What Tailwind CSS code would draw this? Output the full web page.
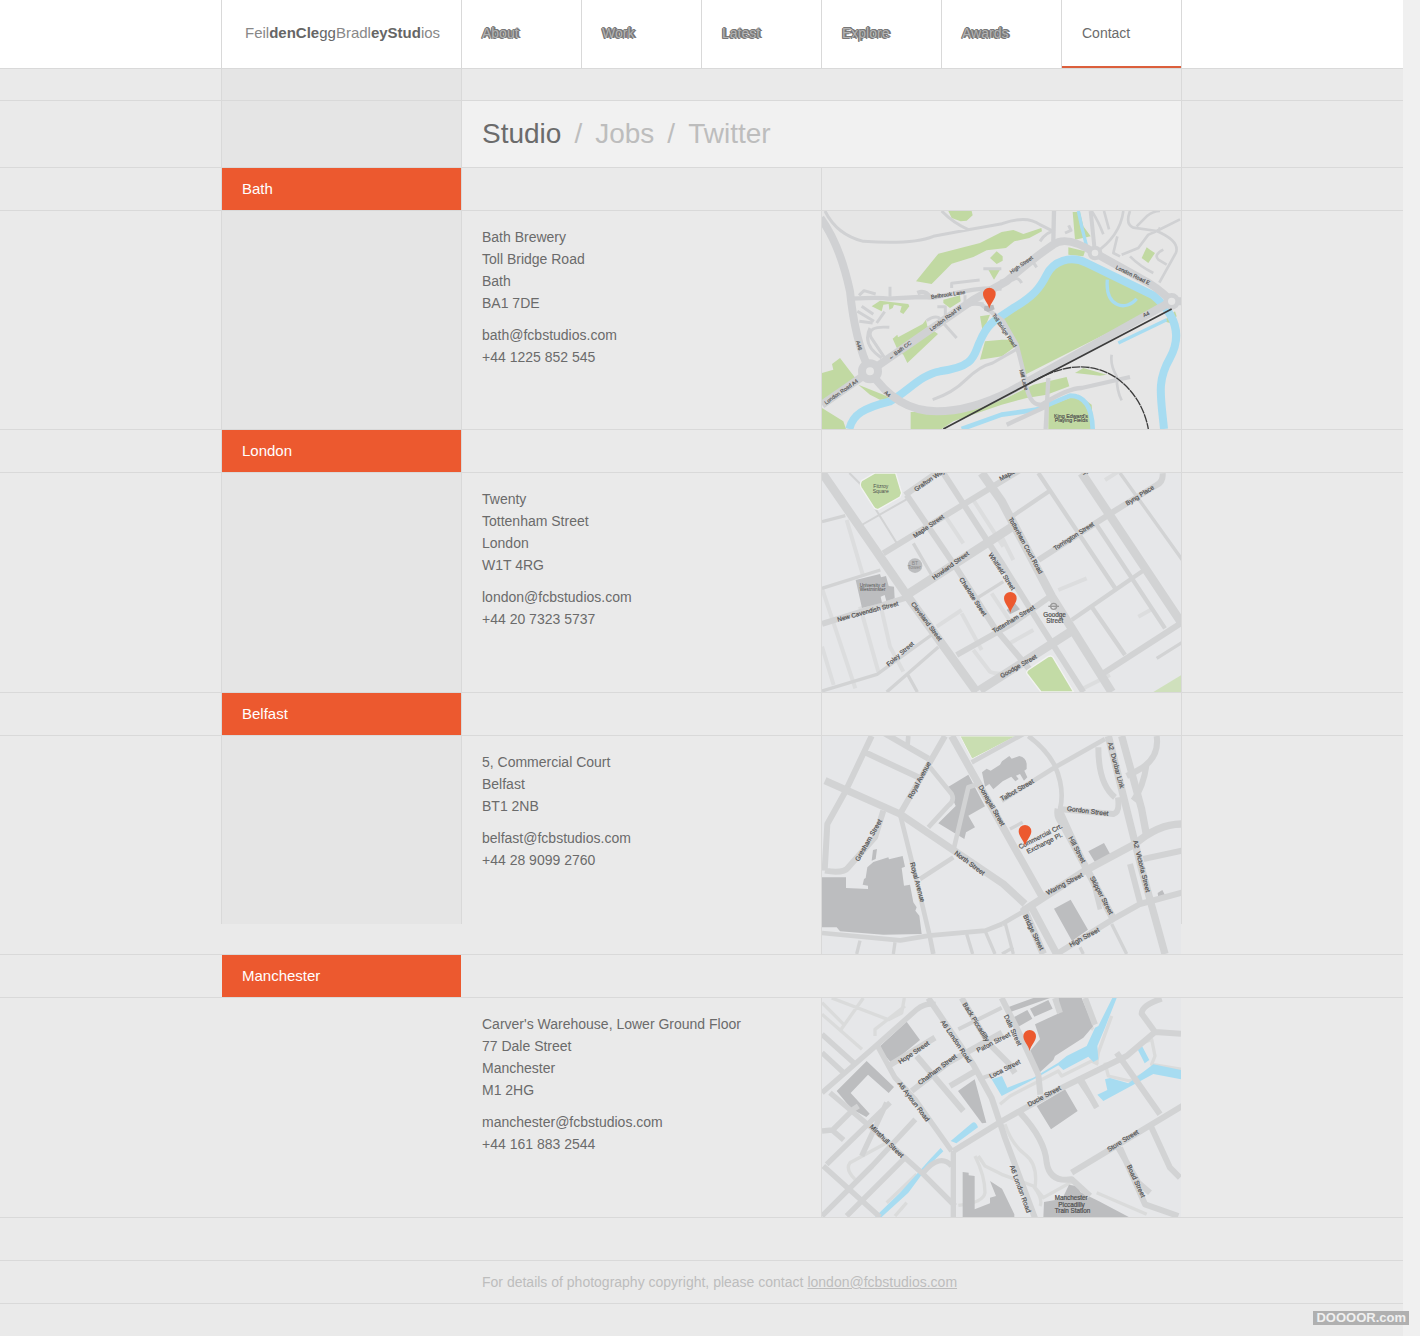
<!DOCTYPE html>
<html lang="en">
<head>
<meta charset="utf-8">
<meta name="viewport" content="width=device-width, initial-scale=1">
<title>Contact – FeildenCleggBradleyStudios</title>
<script src="https://cdn.jsdelivr.net/npm/@tailwindcss/browser@4"></script>
</head>
<body class="flex min-h-screen bg-[#f0f0f0] font-['Liberation_Sans',Arial,sans-serif] text-sm text-[#6b6b6b]">

<!-- shared map pin -->
<svg class="absolute size-0" aria-hidden="true">
  <symbol id="pin" viewBox="-20 -64 40 66" overflow="visible"><path fill="#ec592f" d="M0 0C-4-18-19-29-19-44a19 19 0 1 1 38 0C19-29 4-18 0 0Z"/></symbol>
</svg>

<div class="relative isolate min-w-0 flex-1 bg-[#eaeaea]">

  <!-- column tint and guides -->
  <div class="absolute inset-x-0 top-0 -z-10 h-[924px]" aria-hidden="true">
    <div class="mx-auto flex h-full w-[961px] border-x border-[#d9d9d9]">
      <div class="w-60 border-r border-[#d9d9d9] bg-[#e5e5e5]"></div>
    </div>
  </div>

  <header class="border-b border-[#d9d9d9] bg-white">
    <div class="mx-auto flex h-17 w-[961px] border-r border-[#d9d9d9]">
      <a href="#" class="flex w-60 items-center border-l border-[#d9d9d9] pb-0.5 pl-[23px] text-[15px] text-[#888]"><span>Feil<b class="font-bold text-[#666]">denCle</b><span class="text-[#666]">gg</span>Bradl<b class="font-bold text-[#666]">eyStud</b>ios</span></a>
      <nav class="grid flex-1 grid-cols-6">
        <a href="#" class="flex items-center border-l border-[#d9d9d9] pb-0.5 pl-5 text-[#b4b4b4] [text-shadow:-1px_0_#777,1px_0_#777,2px_0_#777,-1px_1px_#777,1px_-1px_#777,0_-1px_#777]">About</a>
        <a href="#" class="flex items-center border-l border-[#d9d9d9] pb-0.5 pl-5 text-[#b4b4b4] [text-shadow:-1px_0_#777,1px_0_#777,2px_0_#777,-1px_1px_#777,1px_-1px_#777,0_-1px_#777]">Work</a>
        <a href="#" class="flex items-center border-l border-[#d9d9d9] pb-0.5 pl-5 text-[#b4b4b4] [text-shadow:-1px_0_#777,1px_0_#777,2px_0_#777,-1px_1px_#777,1px_-1px_#777,0_-1px_#777]">Latest</a>
        <a href="#" class="flex items-center border-l border-[#d9d9d9] pb-0.5 pl-5 text-[#b4b4b4] [text-shadow:-1px_0_#777,1px_0_#777,2px_0_#777,-1px_1px_#777,1px_-1px_#777,0_-1px_#777]">Explore</a>
        <a href="#" class="flex items-center border-l border-[#d9d9d9] pb-0.5 pl-5 text-[#b4b4b4] [text-shadow:-1px_0_#777,1px_0_#777,2px_0_#777,-1px_1px_#777,1px_-1px_#777,0_-1px_#777]">Awards</a>
        <div class="flex border-l border-[#d9d9d9]"><a href="#" aria-current="page" class="flex flex-1 items-center border-b-2 border-[#dc5f3c] pl-5">Contact</a></div>
      </nav>
    </div>
  </header>

  <main>
    <div class="h-8 border-b border-[#d9d9d9]"></div>

    <div class="border-b border-[#d9d9d9]">
      <div class="mx-auto flex w-[961px] pr-px pl-[241px]">
        <nav class="flex h-[66px] flex-1 items-center gap-[13px] bg-[#f1f1f1] pl-5 text-[28px] text-[#bdbdbd]">
          <a href="#" class="text-[#6b6b6b]">Studio</a><span>/</span><a href="#">Jobs</a><span>/</span><a href="#">Twitter</a>
        </nav>
      </div>
    </div>

    <section>
      <div class="border-b border-[#d9d9d9]">
        <div class="mx-auto flex h-[42px] w-[961px] pl-px">
          <h2 class="flex w-[239px] items-center bg-[#ec592f] pl-5 text-[15px] text-white">Bath</h2>
          <div class="ml-[360px] border-l border-[#d9d9d9]"></div>
        </div>
      </div>
      <div class="border-b border-[#d9d9d9]">
        <div class="mx-auto flex w-[961px] pr-px pl-[261px]">
          <address class="flex-1 pt-[15px] leading-[22px] not-italic">
            <p>Bath Brewery<br>Toll Bridge Road<br>Bath<br>BA1 7DE</p>
            <p class="mt-2.5"><a href="mailto:bath@fcbstudios.com">bath@fcbstudios.com</a><br>+44 1225 852 545</p>
          </address>
          <a href="#" aria-label="Map of the Bath studio" class="block h-[218px] w-90 border-l border-[#d9d9d9]">
            <svg class="size-full" viewBox="6 9 1077 654" preserveAspectRatio="none" fill="none" stroke-linejoin="round" font-family="Liberation Sans">
              <path fill="#e6e6e6" d="M0 0h1100v700H0z"/>
              <g fill="#c1d9a2">
                <path d="M385 9h70l3 13-18 16-18 2-27-10zM288 220l67-83 125-32 65-33 35-6 30 12 54-18 2 10-38 20-45 10-25 20-58 7-40 20-65 20-60 61zM510 150l20-20 18 15v13l-18 10zM505 185h35l-18 30zM155 295l25-17 85 10 3 7-18 23-10-6 5-17-23-5-4 10-10 5-2-17-16 2-5 20zM370 275l50-13 2 18-32 20-20-15zM218 392l14-12 2 8 74-40 10-13 4 20 32 23-92 87-12-25-15-10zM6 495l34-10-4-17 24-18 50 65-30 30-74 45zM115 530l75 30 25 12-35 3-30-15zM6 600l64 40 8 23H6zM480 325l30-5-10 25-13 20zM480 455l15-55 51-5h34v25l-34 25z"/>
                <path d="M272 612h160l128-42 80-40 100-23 8 28-68 25-60 10-75 20-145 50-35 23h-93zM545 330l95-60 50-85 50-25 50 5 100 50 130 70 10 5-415 210-35-95zM758 12h22l10 43 22 30-47 10zM745 118l50 12-5 15-45-5zM965 150l15-32 10 7 15 10-20 30zM1030 340l35-30 5 15-20 20zM765 495l25-15 70 20-20 3zM685 595l90-35 40 30 5 73H685z"/>
              </g>
              <g stroke="#a7dcf1">
                <path stroke-width="24" d="M88 663C98 620 130 600 210 580 260 555 300 500 360 490 470 475 460 440 480 400 505 340 530 335 580 300 640 265 660 240 680 200 700 160 750 140 800 165L1000 262C1080 330 1080 395 1050 450 1010 520 1022 560 1032 663"/>
                <path stroke-width="10" d="M775 9q10 51 25 106M862 215c-7 85 58 95 88 57M895 405l145-70"/>
                <path stroke-width="14" d="M425 663l120-43 105-15 100-42q65 0 68 100"/>
              </g>
              <g stroke="#d0d1d3">
                <path stroke-width="24" d="M2 30q58 80 88 220 15 150 60 240Q230 610 350 610q100 0 220-60l485-270M6 590l144-100 310-215 100-55q80-70 140-110 40-30 125 25l135 75q50 25 95 70h28"/>
                <path stroke-width="9" d="M15 9q35 71 115 91 150 10 210-15 100-20 206-38 74-27 114 3l40 20M365 9q35 36 80 56M117 262l15-14 35 10M210 236v30M395 240v-14l84-10M435 262v20M320 338q20-15 35-10 30 35 55 62M112 310l50 30M118 340l40 5M125 295l35 24M170 345l24-34M208 358q-70-5-55 30l40 60M150 360q-25 50 35 90M338 575q60-20 100-60t80-50l70-40M490 182h54M352 296h24v30M540 220l40-5q15-10 25 10M640 163l10 15M660 100q20-30 45-30M735 75l18-8-7-15"/>
                <path stroke-width="8" d="M815 9q20 30 35 70M852 9l15 55M910 9q-10 76-85 126M930 9q-15 40 10 50l70 10 70-35M950 55l30-30q20-16 40-16M1010 69q70 30 58 65l-50 90M892 85l-12 50 20 10M905 140l50-20 30-40q40-15 30-20M930 145q30 30 70 50M1030 125q-30 15-15 30l25 15M875 440q-5 30 15 65 0 45 15 72"/>
                <path stroke-width="12" d="M812 9l13 126"/>
                <path stroke-width="13" d="M95 272q85-5 110 0l95-5 40 2 60-12q80-20 145-15M702 9l-2 90M485 290l20 15 45 35 40 70 25 100q10 85 50 80 80-50 120-50l145-33M685 510l-8 153M560 650l120-55M430 300q20-20 60-10M292 255q25-10 40 15"/>
              </g>
              <g fill="#e6e6e6" stroke="#d0d1d3"><circle cx="150" cy="490" r="24" stroke-width="24"/><circle cx="825" cy="135" r="16" stroke-width="12"/><circle cx="1055" cy="280" r="18" stroke-width="14"/></g>
              <g stroke="#3c3c3c"><path stroke-width="5" d="M370 663L625 528l430-225"/><path stroke-width="4" stroke-dasharray="26 2" d="M625 528C740 460 820 465 890 510 950 555 975 610 985 663"/></g>
              <path fill="#b9babc" d="M493 295l27-5 4 14-20 8-12-5z"/>
              <g fill="#4f4f4f" stroke="#4f4f4f" stroke-width="0.5" font-size="16">
                <text transform="translate(334 272) rotate(-8)">Belbrook Lane</text><text transform="translate(334 370) rotate(-37)">London Road W</text><text transform="translate(210 455) rotate(-36)">← Bath CC</text><text transform="translate(18 590) rotate(-35)">London Road A4</text><text transform="translate(108 400) rotate(75)">A46</text><text transform="translate(191 556) rotate(38)">A4</text><text transform="translate(574 198) rotate(-35)">High Street</text><text transform="translate(886 182) rotate(26)">London Road E</text><text transform="translate(972 328) rotate(-26)">A4</text><text transform="translate(516 322) rotate(56)">Toll Bridge Road</text><text transform="translate(598 486) rotate(75)">Mill Lane</text><text x="702" y="630">King Edward's</text><text x="704" y="643">Playing Fields</text>
              </g>
              <use href="#pin" x="488" y="238" width="40" height="66"/>
            </svg>
          </a>
        </div>
      </div>
    </section>

    <section>
      <div class="border-b border-[#d9d9d9]">
        <div class="mx-auto flex h-[42px] w-[961px] pl-px">
          <h2 class="flex w-[239px] items-center bg-[#ec592f] pl-5 text-[15px] text-white">London</h2>
          <div class="ml-[360px] border-l border-[#d9d9d9]"></div>
        </div>
      </div>
      <div class="border-b border-[#d9d9d9]">
        <div class="mx-auto flex w-[961px] pr-px pl-[261px]">
          <address class="flex-1 pt-[15px] leading-[22px] not-italic">
            <p>Twenty<br>Tottenham Street<br>London<br>W1T 4RG</p>
            <p class="mt-2.5"><a href="mailto:london@fcbstudios.com">london@fcbstudios.com</a><br>+44 20 7323 5737</p>
          </address>
          <a href="#" aria-label="Map of the London studio" class="block h-[219px] w-90 border-l border-[#d9d9d9]">
            <svg class="size-full" viewBox="6 9 1077 657" preserveAspectRatio="none" fill="none" stroke-linejoin="round" font-family="Liberation Sans">
              <path fill="#e6e7e9" d="M0 0h1100v700H0z"/>
              <g stroke="#dcddde" stroke-width="12">
                <path d="M80 150l50 170M120 410l55 195M6 355l35 105 65 195M6 530l35 115M185 420l25 110 40 75M380 145l50 75M460 90l90 140M545 200l35 70M350 470l75-50M425 430l60 110M460 540l50 65q10 5 36 6M515 370l60 90M715 360l85-35M560 525l80-45M955 440l40-22M855 30l40-25M780 660l90-45"/>
              </g>
              <g stroke="#d2d3d4">
                <path stroke-width="6" d="M88 9l30 30 112 180M125 165l140-80"/>
                <path stroke-width="10" d="M6 355l175-55M6 155l70-18M6 663l165-50 180-130M200 666l155-135M262 612l30 54M280 220l55 95M470 385l80-50M1010 565l80-50M900 9l190 265"/>
                <path stroke-width="13" d="M655 9l230 345M575 140l110-75M755 450l225-155M815 410l100 145M830 165l205 310"/>
                <path stroke-width="18" d="M255 75l100-70M260 75l150 220 115 180 160 190M190 250L600 0M410 555l160-90 120-85M655 270l225-145 130-80q20-10 18-35M850 610l240-155M6 462l250-78M370 9l175 270 125 200 120 187"/>
                <path stroke-width="26" d="M260 375L585 165M480 660l280-180M4 5l256 370 210 291M485 9l60 85 150 285 180 287M785 9l300 450"/>
              </g>
              <path fill="#c3dba6" stroke="#f2f2f2" stroke-width="4" d="M125 32l40-23h62l18 60-5 12-65 37q-10 2-15-8l-37-58q-5-10 2-20zM624 600l60-40q10-5 15 2l62 104h-98l-42-55q-3-6 3-11z"/>
              <path fill="#cfe0bc" d="M1000 666l83-50v50z"/>
              <path fill="#bcbdbf" d="M107 330l73-18 3 10 15-4 8 30 16 2 2 35-25 8-5-18-12 5 4 18-60 16zM560 420l25-20 15 18-30 15z"/>
              <circle cx="285" cy="287" r="22" fill="#bcbdbf"/><circle cx="701" cy="409" r="9" stroke="#999" stroke-width="4"/><path stroke="#999" stroke-width="4" d="M685 409h32"/>
              <g fill="#4f4f4f" stroke="#4f4f4f" stroke-width="0.6" font-size="19">
                <text transform="translate(285 205) rotate(-35)">Maple Street</text><text transform="translate(288 65) rotate(-34)">Grafton Way</text><text transform="translate(343 330) rotate(-36)">Howland Street</text><text transform="translate(54 455) rotate(-15)">New Cavendish Street</text><text transform="translate(272 402) rotate(53)">Cleveland Street</text><text transform="translate(206 590) rotate(-41)">Foley Street</text><text transform="translate(417 328) rotate(57)">Charlotte Street</text><text transform="translate(505 254) rotate(57)">Whitfield Street</text><text transform="translate(522 490) rotate(-31)">Tottenham Street</text><text transform="translate(565 146) rotate(61)">Tottenham Court Road</text><text transform="translate(706 242) rotate(-33)">Torrington Street</text><text transform="translate(922 107) rotate(-32)">Byng Place</text><text transform="translate(545 625) rotate(-30)">Goodge Street</text><text transform="translate(542 33) rotate(-28)">Maple</text><text x="670" y="440">Goodge</text><text x="679" y="458">Street</text><text transform="translate(787 9) rotate(57)">T</text>
              </g>
              <g fill="#4f4f4f" font-size="15"><text x="160" y="54">Fitzroy</text><text x="158" y="68">Square</text><text x="119" y="351" font-size="14">University of</text><text x="119" y="363" font-size="14">Westminster</text><text x="275" y="285" fill="#888">BT</text><text x="263" y="297" fill="#888">Tower</text></g>
              <use href="#pin" x="551" y="365" width="40" height="66"/>
            </svg>
          </a>
        </div>
      </div>
    </section>

    <section>
      <div class="border-b border-[#d9d9d9]">
        <div class="mx-auto flex h-[42px] w-[961px] pl-px">
          <h2 class="flex w-[239px] items-center bg-[#ec592f] pl-5 text-[15px] text-white">Belfast</h2>
          <div class="ml-[360px] border-l border-[#d9d9d9]"></div>
        </div>
      </div>
      <div class="border-b border-[#d9d9d9]">
        <div class="mx-auto flex w-[961px] pr-px pl-[261px]">
          <address class="flex-1 pt-[15px] leading-[22px] not-italic">
            <p>5, Commercial Court<br>Belfast<br>BT1 2NB</p>
            <p class="mt-2.5"><a href="mailto:belfast@fcbstudios.com">belfast@fcbstudios.com</a><br>+44 28 9099 2760</p>
          </address>
          <a href="#" aria-label="Map of the Belfast studio" class="block h-[218px] w-90 border-l border-[#d9d9d9]">
            <svg class="size-full" viewBox="6 6 1077 654" preserveAspectRatio="none" fill="none" stroke-linejoin="round" font-family="Liberation Sans">
              <path fill="#e6e7e9" d="M0 0h1100v700H0z"/>
              <path fill="#c9deb1" stroke="#f0f0f0" stroke-width="3" d="M420 6h170L456 75z"/>
              <path fill="#bcbdbf" d="M6 430H78V462L144 465V455L128 452 132 435 137 432 142 400 160 384 205 370 207 376 248 366 255 398 245 402 252 455 270 452 280 505 290 520 286 530 298 545 305 600 190 602 60 592 50 580H6zM383 160l62-38 50 95-50 28 20 35-27 15-5 20-78-47 52-52zM486 115L500 104 512 110 540 92 546 82 568 66 575 74 598 66Q618 70 620 90V105L613 110 622 130 612 140 600 120 588 125 596 135 586 142 574 128 548 142 520 166 508 150 495 158z"/>
              <path fill="#bcbdbf" d="M805 352l47-25 20 36-45 25zM702 524l50-27 52 90-48 34zM1013 477l14-9 8 16-20 8zM155 380l4-32 12-3-4 30z"/>
              <g stroke="#d2d3d4">
                <path stroke-width="10" d="M120 620l-10 40M225 625l-5 35M440 600l18 60M495 590l30 70M555 565l25 95M875 570l45 90M780 640l10 20M580 640l-34 20M570 285l38-20"/>
                <path stroke-width="14" d="M265 6l-3 35M330 100l65 80q10 20-10 35l-60 65M240 240l40 160 50 210 10 50M400 350l45-190 30-10M300 435l100-65M455 85l210-115M545 200l160-100 150-85M625 6q55 40 80 90 30 70 15 130l100 220 20 80M6 597l235 22 85-14 170-15 50-20M546 570l60-35"/>
                <path stroke-width="18" d="M155 6L75 175 22 270l-8 140M190 230l-25 80-80 90q-15 20-70 10M135 55l160 75M190 -4l135 78M240 240L375 6M715 225l165 15q20-5 14-50M835 40q0 110 50 150M1010 6q10 70-60 105l-30 15M980 90q-10 70-40 110M930 390l30 115"/>
                <path stroke-width="22" d="M15 140l225 100 310 210 65 60M395 6l270 480M610 530l70-45 115-75 150-80q70-60 140-60M715 225q-5 20 10 40l75 140 80 150M635 520l75 140"/>
                <path stroke-width="18" d="M710 660l170-105 80-45 130-35M970 375l115-25"/>
                <path stroke-width="22" d="M905 6l60 220 15 80M865 6l100 400 70 254M610 520l60 140"/>
              </g>
              <g fill="#4f4f4f" stroke="#4f4f4f" stroke-width="0.6" font-size="20">
                <text transform="translate(275 196) rotate(-62)">Royal Avenue</text><text transform="translate(116 383) rotate(-60)">Gresham Street</text><text transform="translate(402 360) rotate(37)">North Street</text><text transform="translate(270 387) rotate(75)">Royal Avenue</text><text transform="translate(475 158) rotate(60)">Donegall Street</text><text transform="translate(546 202) rotate(-30)">Talbot Street</text><text transform="translate(740 230) rotate(7)">Gordon Street</text><text transform="translate(600 346) rotate(-27)">Commercial Crt.</text><text transform="translate(624 360) rotate(-27)">Exchange Pl.</text><text transform="translate(745 312) rotate(62)">Hill Street</text><text transform="translate(683 484) rotate(-28)">Waring Street</text><text transform="translate(809 431) rotate(62)">Skipper Street</text><text transform="translate(609 545) rotate(64)">Bridge Street</text><text transform="translate(752 640) rotate(-29)">High Street</text><text transform="translate(863 26) rotate(75)">A2&nbsp; Dunbar Link</text><text transform="translate(939 320) rotate(76)">A2&nbsp; Victoria Street</text>
              </g>
              <use href="#pin" x="595" y="272" width="40" height="66"/>
            </svg>
          </a>
        </div>
      </div>
    </section>

    <section>
      <div class="border-b border-[#d9d9d9]">
        <div class="mx-auto flex h-[42px] w-[961px] pl-px">
          <h2 class="flex w-[239px] items-center bg-[#ec592f] pl-5 text-[15px] text-white">Manchester</h2>
        </div>
      </div>
      <div class="border-b border-[#d9d9d9]">
        <div class="mx-auto flex w-[961px] pr-px pl-[261px]">
          <address class="flex-1 pt-[15px] leading-[22px] not-italic">
            <p>Carver's Warehouse, Lower Ground Floor<br>77 Dale Street<br>Manchester<br>M1 2HG</p>
            <p class="mt-2.5"><a href="mailto:manchester@fcbstudios.com">manchester@fcbstudios.com</a><br>+44 161 883 2544</p>
          </address>
          <a href="#" aria-label="Map of the Manchester studio" class="block h-[219px] w-90 border-l border-[#d9d9d9]">
            <svg class="size-full" viewBox="6 6 1077 657" preserveAspectRatio="none" fill="none" stroke-linejoin="round" font-family="Liberation Sans">
              <path fill="#e6e7e9" d="M0 0h1100v700H0z"/>
              <g stroke="#dadbdb" stroke-width="10">
                <path d="M35 6l170 65 40-20 8-45M130 6L60 105M6 20l65 65M6 55l120 105M165 120v-20l90-70M200 440l-110 60q-15 20 15 50M200 620l90-85M225 660l35-40M465 480q30 60 30 110-5 30-80 38M475 480l20 30 50 25 95 35q30 40 20 60M555 385q20 60 60 90t30 100l25 30 90-50M540 325l30-25 145-75 10 15 90-45 20 10M795 80l25 20M875 60l-40 110-5 30M855 200l10 40 65 15 40-20 50-25M970 140l25-10 10 50-10 25 90 15M830 590l150 65"/>
              </g>
              <path fill="#a7dcf1" d="M392 435l65-55q10-5 17 14l-65 48zM165 663L240 590 290 535 330 490 362 456 370 466 320 515 295 550 265 590 185 663zM515 250L546 240 562 275 640 245 715 200 740 180 800 150 825 95 835 90 877 6H890L855 95 832 150 835 190 820 198 805 182 730 222 715 208 650 245 545 300zM832 296L862 282 855 250 870 246 925 262 1000 205 1083 222V250L1000 234 850 315zM952 158l14-8 22 42-14 10z"/>
              <path fill="#bcbdbf" d="M175 155l85-78 40 55-85 70zM50 285l90-90 82 78-16 18-62-55-52 55 57 62-10 10-45-25zM414 285l50-35 35 130-13 2zM428 528l18 2v8l18 2V640L510 622V605L528 600 510 555 546 578 583 655V663H428zM650 330l85-50 38 65-80 55zM578 65L622 42 637 68 595 92zM630 38L685 12 698 38 643 62zM560 35L640 6H690L565 50zM645 85L720 50 715 6H785L820 90 790 125 705 180 700 192 658 230 630 165 660 130zM672 618l55-10 20-42 25 5 10 18 55 27 95 50H670z"/>
              <g stroke="#d2d3d4">
                <path stroke-width="12" d="M415 100l130-65M475 250l71-25M770 245l60 90"/>
                <path stroke-width="16" d="M6 290l155-135 130-115q25-20 55-15M6 115l95 85M6 170l65 60M30 290l130 110 145 130 100 100M210 320L20 505M115 330l-15 10-65 65M10 510l170 153M6 405l30-3 35 30M6 660l150-150 130-140M80 660l170-170M170 145l55 100 60 65 110 155M200 320L125 480M400 465v198M310 530q50-60 85-20"/>
                <path stroke-width="18" d="M325 6l135 200 55 100 40 120 90 240M205 210l140-85M275 285l110-85L546 110M290 180l140 165M390 270l85-50M400 465L546 375l170-95L920 180l85-72M890 170l130 185M755 530l340-205M895 455l60 105 35 30M905 475M1005 108l-40-55q0-25 60-45M1005 108l78 5M425 6l80 135 60 60 20 30M545 6l50 100 60 130 6 60M780 245l50 90M600 350q75 80 80 150 10 60 75 50l55 50M990 385l60 130 30 30M900 455l75 170 100 35M795 6l30 80M705 6l15 45"/>
              </g>
              <g fill="#4f4f4f" stroke="#4f4f4f" stroke-width="0.6" font-size="20">
                <text transform="translate(241 205) rotate(-34)">Hope Street</text><text transform="translate(300 268) rotate(-37)">Chatham Street</text><text transform="translate(361 78) rotate(56)">A6 London Road</text><text transform="translate(427 25) rotate(58)">Back Piccadilly</text><text transform="translate(474 170) rotate(-27)">Paton Street</text><text transform="translate(512 248) rotate(-27)">Loca Street</text><text transform="translate(232 263) rotate(53)">A6 Aytoun Road</text><text transform="translate(148 394) rotate(44)">Minshull Street</text><text transform="translate(551 60) rotate(65)">Dale Street</text><text transform="translate(627 332) rotate(-28)">Ducie Street</text><text transform="translate(867 468) rotate(-32)">Store Street</text><text transform="translate(920 510) rotate(65)">Boad Street</text><text transform="translate(569 511) rotate(70)">A6 London Road</text><text x="704" y="612" font-size="19">Manchester</text><text x="715" y="632" font-size="19">Piccadilly</text><text x="704" y="652" font-size="19">Train Station</text>
              </g>
              <use href="#pin" x="609" y="101" width="40" height="66"/>
            </svg>
          </a>
        </div>
      </div>
    </section>
  </main>

  <footer>
    <div class="h-[43px] border-b border-[#d9d9d9]"></div>
    <div class="border-b border-[#d9d9d9]">
      <p class="mx-auto flex h-[42px] w-[961px] items-center gap-1 pl-[261px] text-[#bdbdbd]">For details of photography copyright, please contact <a href="mailto:london@fcbstudios.com" class="underline">london@fcbstudios.com</a></p>
    </div>
    <div class="h-8"></div>
  </footer>
</div>

<div class="relative w-[17px]">
  <div class="absolute right-[11px] bottom-[11px] flex h-3.5 items-center bg-[#b0b0b0] px-[3px] text-[13px] font-bold text-[#f0f0f0]">DOOOOR.com</div>
</div>
</body>
</html>
